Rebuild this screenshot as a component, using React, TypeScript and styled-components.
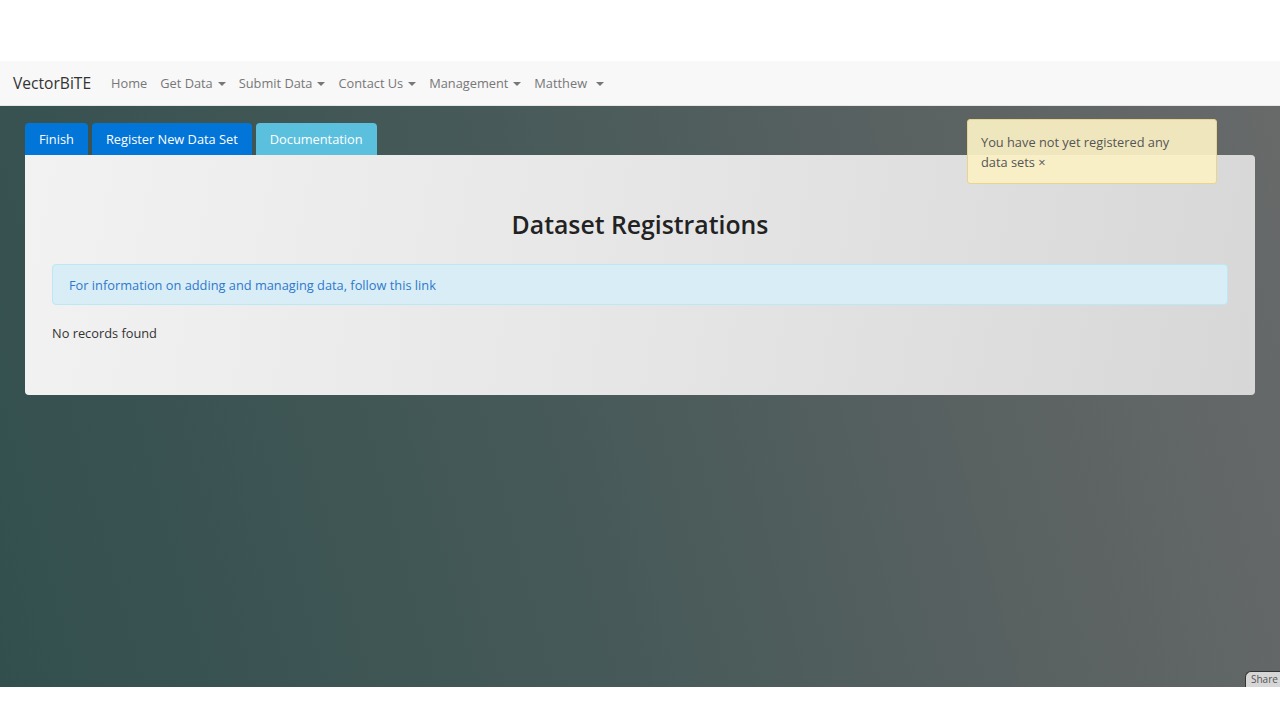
import React from "react";
import styled, { createGlobalStyle } from "styled-components";

const Global = createGlobalStyle`
  html, body { margin: 0; padding: 0; background: #fff; }
  body { font-family: "Open Sans", "Noto Sans", Arial, sans-serif; }
  * { box-sizing: border-box; }
`;

const Page = styled.div`
  width: 1280px;
  height: 720px;
  display: flex;
  flex-direction: column;
  overflow: hidden;
`;

const TopGap = styled.div`
  height: 61px;
  background: #fff;
`;

const Navbar = styled.nav`
  height: 45px;
  background: #f8f8f8;
  border-bottom: 1px solid #e7e7e7;
  display: flex;
  align-items: center;
  padding-left: 13px;
`;

const Brand = styled.span`
  font-size: 15.6px;
  color: #333;
  margin-right: 20px;
`;

const NavLink = styled.span`
  font-size: 12.8px;
  color: #777;
  margin-right: 13px;
  display: inline-flex;
  align-items: center;
  gap: 4px;
`;

const Caret = styled.span<{ $gap?: number }>`
  display: inline-block;
  width: 0;
  height: 0;
  border-left: 4px solid transparent;
  border-right: 4px solid transparent;
  border-top: 4px solid #777;
  margin-left: ${(p) => p.$gap ?? 1}px;
  margin-top: 2px;
`;

const Body = styled.main`
  position: relative;
  height: 581px;
  background: linear-gradient(75deg, #324f4e 0%, #475a59 45%, #5b6262 75%, #686a6a 100%);
  padding: 17px 25px 0 25px;
`;

const ButtonRow = styled.div`
  display: flex;
  gap: 4px;
  height: 32px;
`;

const Btn = styled.button<{ $variant: "primary" | "info" }>`
  border: none;
  border-radius: 4px 4px 0 0;
  background: ${(p) => (p.$variant === "primary" ? "#0275d8" : "#5bc0de")};
  color: #fff;
  font-family: inherit;
  font-size: 12.8px;
  padding: 0 14px;
  height: 32px;
  cursor: pointer;
`;

const Card = styled.section`
  background: linear-gradient(100deg, #f2f2f2 0%, #e6e6e6 50%, #d7d7d7 100%);
  border-radius: 0 4px 4px 4px;
  height: 240px;
  padding: 53px 27px 0 27px;
`;

const Title = styled.h1`
  margin: 0;
  text-align: center;
  font-size: 24.8px;
  font-weight: 600;
  color: #222;
  line-height: 32px;
`;

const InfoAlert = styled.div`
  margin-top: 24px;
  height: 41px;
  background: #d9edf7;
  border: 1px solid #bce8f1;
  border-radius: 4px;
  padding: 0 16px;
  display: flex;
  align-items: center;
  font-size: 12.8px;
  color: #2e79cc;
`;

const Empty = styled.p`
  margin: 19px 0 0 0;
  font-size: 12.8px;
  color: #333;
`;

const Toast = styled.div`
  position: absolute;
  top: 13px;
  left: 967px;
  width: 250px;
  height: 65px;
  background: rgba(250, 240, 196, 0.93);
  border: 1px solid #e8d48e;
  border-radius: 3px;
  padding: 12px 35px 12px 13px;
  font-size: 12.8px;
  line-height: 20px;
  color: #555;
`;

const Share = styled.div`
  position: absolute;
  right: 0;
  bottom: 0;
  width: 35px;
  height: 16px;
  background: #d6d6d6;
  border-radius: 6px 0 0 0;
  border-top: 1px solid #333;
  border-left: 1px solid #333;
  font-size: 10px;
  color: #555;
  padding-left: 5px;
  line-height: 15px;
`;

const BottomGap = styled.div`
  flex: 1;
  background: #fff;
`;

const links = [
  { label: "Home", caret: false },
  { label: "Get Data", caret: true },
  { label: "Submit Data", caret: true },
  { label: "Contact Us", caret: true },
  { label: "Management", caret: true },
  { label: "Matthew", caret: true, wide: true },
];

export default function App() {
  return (
    <Page>
      <Global />
      <TopGap />
      <Navbar>
        <Brand>VectorBiTE</Brand>
        {links.map((l) => (
          <NavLink key={l.label}>
            {l.label}
            {l.caret && <Caret $gap={l.wide ? 5 : 1} />}
          </NavLink>
        ))}
      </Navbar>
      <Body>
        <ButtonRow>
          <Btn $variant="primary">Finish</Btn>
          <Btn $variant="primary">Register New Data Set</Btn>
          <Btn $variant="info">Documentation</Btn>
        </ButtonRow>
        <Card>
          <Title>Dataset Registrations</Title>
          <InfoAlert>For information on adding and managing data, follow this link</InfoAlert>
          <Empty>No records found</Empty>
        </Card>
        <Toast>You have not yet registered any data sets ×</Toast>
        <Share>Share</Share>
      </Body>
      <BottomGap />
    </Page>
  );
}
